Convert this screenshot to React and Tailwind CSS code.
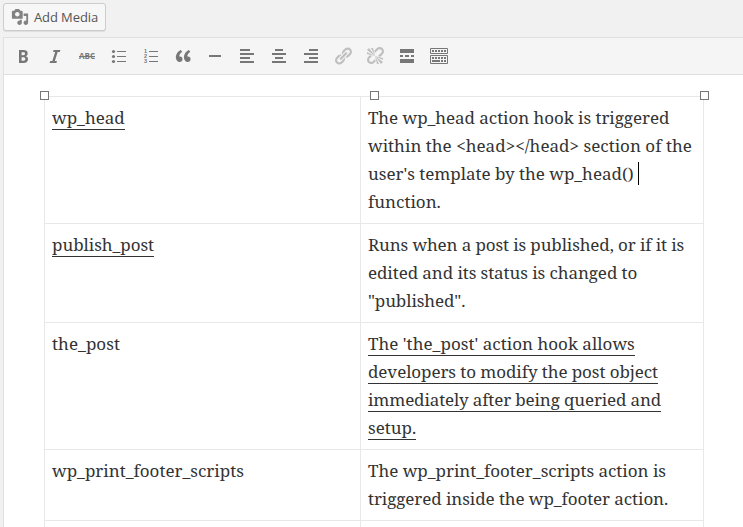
const icon = {
  media:
    'M13 11V4c0-.55-.45-1-1-1h-1.67L9 1H5L3.67 3H2c-.55 0-1 .45-1 1v7c0 .55.45 1 1 1h10c.55 0 1-.45 1-1zM7 4.5c1.38 0 2.5 1.12 2.5 2.5S8.38 9.5 7 9.5 4.5 8.38 4.5 7 5.62 4.5 7 4.5zM14 6h5v10.5c0 1.38-1.12 2.5-2.5 2.5S14 17.88 14 16.5s1.12-2.5 2.5-2.5c.17 0 .34.02.5.05V9h-3V6zm-4 8.05V13h2v3.5c0 1.38-1.12 2.5-2.5 2.5S7 17.88 7 16.5 8.12 14 9.5 14c.17 0 .34.02.5.05z',
  bold:
    'M6 4v13h4.54c1.37 0 2.46-.33 3.26-1 .8-.66 1.2-1.58 1.2-2.77 0-.84-.17-1.51-.51-2.01s-.9-.85-1.67-1.03v-.09c.57-.1 1.02-.4 1.36-.9s.51-1.13.51-1.91c0-1.14-.39-1.98-1.17-2.5C12.75 4.26 11.5 4 9.78 4H6zm2.57 5.15V6.26h1.36c.73 0 1.27.11 1.61.32.34.22.51.58.51 1.07 0 .54-.16.92-.47 1.15s-.82.35-1.51.35h-1.5zm0 2.19h1.6c1.44 0 2.16.53 2.16 1.61 0 .6-.17 1.05-.51 1.34s-.86.43-1.57.43H8.57v-3.38z',
  italic: 'M15.4 4h-6.75l-.62 2h2.13l-2.8 9H5.22l-.62 2h6.75l.62-2H9.85l2.8-9h2.13z',
  quote:
    'M9.49 13.22c0-.74-.2-1.38-.61-1.9-.62-.78-1.83-.88-2.53-.72-.29-1.65 1.11-3.75 2.92-4.65L7.88 4c-2.73 1.3-5.42 4.28-4.96 8.05C3.21 14.43 4.59 16 6.54 16c.85 0 1.56-.25 2.12-.75s.83-1.18.83-2.03zm8.05 0c0-.74-.2-1.38-.61-1.9-.63-.78-1.83-.88-2.53-.72-.29-1.65 1.11-3.75 2.92-4.65L15.93 4c-2.73 1.3-5.41 4.28-4.95 8.05.29 2.38 1.66 3.95 3.61 3.95.85 0 1.56-.25 2.12-.75s.83-1.18.83-2.03z',
  hr: 'M4 9h12v2H4z',
  left: 'M3 3h10v2H3zM3 7h14v2H3zM3 11h10v2H3zM3 15h14v2H3z',
  center: 'M6 3h8v2H6zM3 7h14v2H3zM6 11h8v2H6zM3 15h14v2H3z',
  right: 'M8 3h9v2H8zM3 7h14v2H3zM8 11h9v2H8zM3 15h14v2H3z',
  link:
    'M17.74 2.76c1.68 1.69 1.68 4.41 0 6.1l-1.53 1.52c-1.12 1.12-2.7 1.47-4.14 1.09l2.62-2.61.76-.77.76-.76c.84-.84.84-2.2 0-3.04-.84-.85-2.2-.85-3.04 0l-.77.76-3.38 3.38c-.37-1.44-.02-3.02 1.1-4.14l1.52-1.53c1.69-1.68 4.42-1.68 6.1 0zM8.59 13.43l5.34-5.34c.42-.42.42-1.1 0-1.52-.44-.43-1.13-.39-1.53 0l-5.33 5.34c-.42.42-.42 1.1 0 1.52.44.43 1.13.39 1.52 0zm-.76 2.29l4.14-4.15c.38 1.44.03 3.02-1.09 4.14l-1.52 1.53c-1.69 1.68-4.41 1.68-6.1 0-1.68-1.68-1.68-4.42 0-6.1l1.53-1.52c1.12-1.12 2.7-1.47 4.14-1.1l-4.14 4.15c-.85.84-.85 2.2 0 3.05.84.84 2.2.84 3.04 0z',
  unlink:
    'M17.74 2.26c1.68 1.69 1.68 4.41 0 6.1l-1.53 1.52c-.32.33-.69.58-1.08.77L13 10l1.69-1.64.76-.77.76-.76c.84-.84.84-2.2 0-3.04-.84-.85-2.2-.85-3.04 0l-.77.76-.76.76L10 7l-.65-2.14c.19-.38.44-.75.77-1.07l1.52-1.53c1.69-1.68 4.42-1.68 6.1 0zM2 4l8 6-6-8zm4-2l4 8-2-8H6zM2 6l8 4-8-2V6zm7.36 7.69L10 13l.74 2.35-1.38 1.39c-1.69 1.68-4.41 1.68-6.1 0-1.68-1.68-1.68-4.42 0-6.1l1.39-1.38L7 10l-.69.64-1.52 1.53c-.85.84-.85 2.2 0 3.04.84.85 2.2.85 3.04 0zM18 16l-8-6 6 8zm-4 2l-4-8 2 8h2zm4-4l-8-4 8 2v2z',
  more: 'M3 3h14v4H3zM3 9h3v2H3zM8 9h4v2H8zM14 9h3v2h-3zM3 13h14v4H3z',
}

function Icon({ d, className = '', children }) {
  return (
    <svg viewBox="0 0 20 20" className={`shrink-0 fill-current ${className}`}>
      {d && <path d={d} />}
      {children}
    </svg>
  )
}

function Tool({ label, disabled, ...rest }) {
  return (
    <button aria-label={label} className="flex w-8 justify-center">
      <Icon {...rest} className={disabled ? 'size-5 text-[#bfbfbf]' : 'size-5 text-[#777]'} />
    </button>
  )
}

function Toolbar() {
  return (
    <div className="flex h-[37px] items-center border-b border-[#dedede] bg-[#f5f5f5] pl-[3px]">
      <Tool label="Bold" d={icon.bold} />
      <Tool label="Italic" d={icon.italic} />
      <Tool label="Strikethrough">
        <text x="2" y="13" textLength="16" className="font-['Open_Sans',sans-serif] text-[8px] font-bold">ABC</text>
        <path d="M2 10h16v1H2z" />
      </Tool>
      <Tool label="Bulleted list">
        <path d="M8 5h9v1H8zM8 10h9v1H8zM8 15h9v1H8z" />
        <circle cx="4.5" cy="5.5" r="1.6" />
        <circle cx="4.5" cy="10.5" r="1.6" />
        <circle cx="4.5" cy="15.5" r="1.6" />
      </Tool>
      <Tool label="Numbered list">
        <path d="M8 5h9v1H8zM8 10h9v1H8zM8 15h9v1H8z" />
        <g className="font-['Liberation_Sans',sans-serif] text-[5.5px] font-bold">
          <text x="3" y="7">1</text>
          <text x="3" y="12">2</text>
          <text x="3" y="17">3</text>
        </g>
      </Tool>
      <Tool label="Blockquote" d={icon.quote} />
      <Tool label="Horizontal line" d={icon.hr} />
      <Tool label="Align left" d={icon.left} />
      <Tool label="Align center" d={icon.center} />
      <Tool label="Align right" d={icon.right} />
      <Tool label="Insert link" d={icon.link} disabled />
      <Tool label="Remove link" d={icon.unlink} disabled />
      <Tool label="Read more" d={icon.more} />
      <Tool label="Toolbar toggle">
        <path d="M1.5 2.5h17v5h-17zM1.5 9.5h17v8h-17z" fill="none" stroke="currentColor" />
        <path d="M3 5h14M3 12h14" fill="none" stroke="currentColor" strokeWidth="2" strokeDasharray="2 1" />
        <path d="M3 15h8M12 15h2M15 15h2" fill="none" stroke="currentColor" strokeWidth="2" />
      </Tool>
    </div>
  )
}

function Line({ children, linked, className = '' }) {
  return (
    <div className="h-7">
      <span className={`inline-block whitespace-pre ${linked ? 'h-[26px] border-b border-[#333]' : ''} ${className}`}>
        {children}
      </span>
    </div>
  )
}

function Row({ children }) {
  return <div className="grid grid-cols-[316px_343px] border-b border-[#e8e8e8]">{children}</div>
}

function Cell({ children }) {
  return <div className="border-r border-[#e8e8e8] py-[7px] pl-[7px]">{children}</div>
}

function Handle({ className }) {
  return <span className={`absolute -top-[6px] size-[9px] border border-[#777] bg-white ${className}`} />
}

export default function App() {
  return (
    <div className="flex h-[527px] w-[743px] flex-col overflow-hidden bg-[#f1f1f1]">
      <div className="h-[37px] shrink-0 pl-[3px] pt-[3px]">
        <button className="flex h-7 w-[103px] items-center rounded-[3px] border border-[#ccc] bg-[#f7f7f7] pl-[7px] shadow-[0_1px_0_rgba(0,0,0,0.08)]">
          <Icon d={icon.media} className="size-[18px] text-[#828282]" />
          <span className="ml-[5px] whitespace-nowrap pt-px font-['Open_Sans',sans-serif] text-[13px] tracking-[-0.1px] text-[#555]">
            Add Media
          </span>
        </button>
      </div>
      <div className="ml-[3px] flex-1 border-l border-t border-[#e0e0e0] bg-white">
        <Toolbar />
        <div className="relative ml-10 mt-[21px] w-[660px] border-l border-t border-[#e8e8e8] font-['Noto_Serif','Liberation_Serif',serif] text-[17px] leading-7 text-[#333]">
          <Row>
            <Cell>
              <Line linked>wp_head</Line>
            </Cell>
            <Cell>
              <Line className="tracking-[-0.05px]">The wp_head action hook is triggered</Line>
              <Line className="tracking-[0.015px]">{'within the <head></head> section of the'}</Line>
              <div className="flex">
                <Line className="tracking-[-0.02px]">user's template by the wp_head()</Line>
                <span className="ml-1 mt-[2px] h-[23px] w-px bg-black" />
              </div>
              <Line>function.</Line>
            </Cell>
          </Row>
          <Row>
            <Cell>
              <Line linked className="tracking-[-0.05px]">publish_post</Line>
            </Cell>
            <Cell>
              <Line className="tracking-[-0.12px]">Runs when a post is published, or if it is</Line>
              <Line className="tracking-[-0.08px]">edited and its status is changed to</Line>
              <Line className="tracking-[-0.1px]">"published".</Line>
            </Cell>
          </Row>
          <Row>
            <Cell>
              <Line className="tracking-[0.05px]">the_post</Line>
            </Cell>
            <Cell>
              <Line linked className="tracking-[0.03px]">The 'the_post' action hook allows</Line>
              <Line linked className="tracking-[-0.08px]">developers to modify the post object</Line>
              <Line linked className="tracking-[-0.14px]">immediately after being queried and</Line>
              <Line linked>setup.</Line>
            </Cell>
          </Row>
          <Row>
            <Cell>
              <Line>wp_print_footer_scripts</Line>
            </Cell>
            <Cell>
              <Line className="tracking-[-0.02px]">The wp_print_footer_scripts action is</Line>
              <Line className="tracking-[-0.08px]">triggered inside the wp_footer action.</Line>
            </Cell>
          </Row>
          <div className="grid h-8 grid-cols-[316px_343px]">
            <Cell />
            <Cell />
          </div>
          <Handle className="-left-[5px]" />
          <Handle className="left-[325px]" />
          <Handle className="left-[655px]" />
        </div>
      </div>
    </div>
  )
}
